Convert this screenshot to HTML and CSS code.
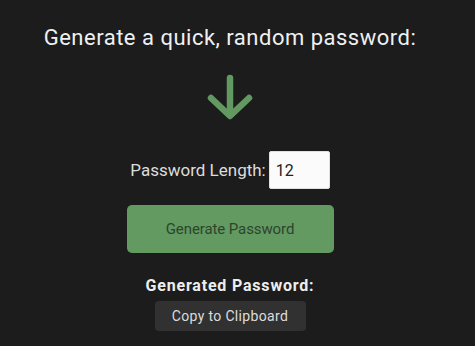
FILE: index.html
```html
<!DOCTYPE html>
<html>
<head>
<meta charset="utf-8">
<link rel="stylesheet" href="styles.css">
</head>
<body>
<main class="page">
  <h1 class="title">Generate a quick, random password:</h1>
  <svg class="arrow" width="50" height="50" viewBox="0 0 50 50">
    <line x1="25" y1="8" x2="25" y2="44" />
    <polyline points="6,28 25,46 44,28" />
  </svg>
  <div class="length-row">
    <label class="length-label" for="len">Password Length:</label>
    <input class="length-input" id="len" type="text" value="12">
  </div>
  <button class="generate">Generate Password</button>
  <div class="result-label">Generated Password:</div>
  <button class="copy">Copy to Clipboard</button>
</main>
</body>
</html>
```
FILE: styles.css
```css
html, body {
  margin: 0;
  background: #1c1c1c;
  font-family: Roboto, "Liberation Sans", sans-serif;
}
.page {
  width: 460px;
  display: flex;
  flex-direction: column;
  align-items: center;
  padding-top: 25px;
}
.title {
  margin: 0;
  font-size: 22px;
  line-height: 26px;
  font-weight: 400;
  letter-spacing: 0.5px;
  color: #eef0f2;
}
.arrow {
  margin-top: 19px;
  display: block;
  fill: none;
  stroke: #629960;
  stroke-width: 6.5;
  stroke-linecap: round;
  stroke-linejoin: round;
}
.length-row {
  margin-top: 31px;
  display: flex;
  align-items: center;
  gap: 3px;
  height: 38px;
}
.length-label {
  font-size: 17px;
  color: #dcdcdc;
}
.length-input {
  box-sizing: border-box;
  width: 61px;
  height: 38px;
  border: 1px solid #e0e0e0;
  border-radius: 2px;
  background: #fbfbfb;
  padding: 0 6px;
  font-family: inherit;
  font-size: 16px;
  color: #222;
  outline: none;
}
.generate {
  margin-top: 16px;
  width: 207px;
  height: 48px;
  border: none;
  border-radius: 5px;
  background: #639a61;
  color: #2d452d;
  font-family: inherit;
  font-size: 15px;
  letter-spacing: -0.1px;
}
.result-label {
  margin-top: 23px;
  font-size: 16px;
  line-height: 19px;
  font-weight: 700;
  color: #eeeeee;
  letter-spacing: 0.8px;
}
.copy {
  margin-top: 6px;
  width: 151px;
  height: 30px;
  border: none;
  border-radius: 4px;
  background: #313131;
  color: #dcdcdc;
  font-family: inherit;
  font-size: 14px;
  letter-spacing: 0.35px;
}
```
